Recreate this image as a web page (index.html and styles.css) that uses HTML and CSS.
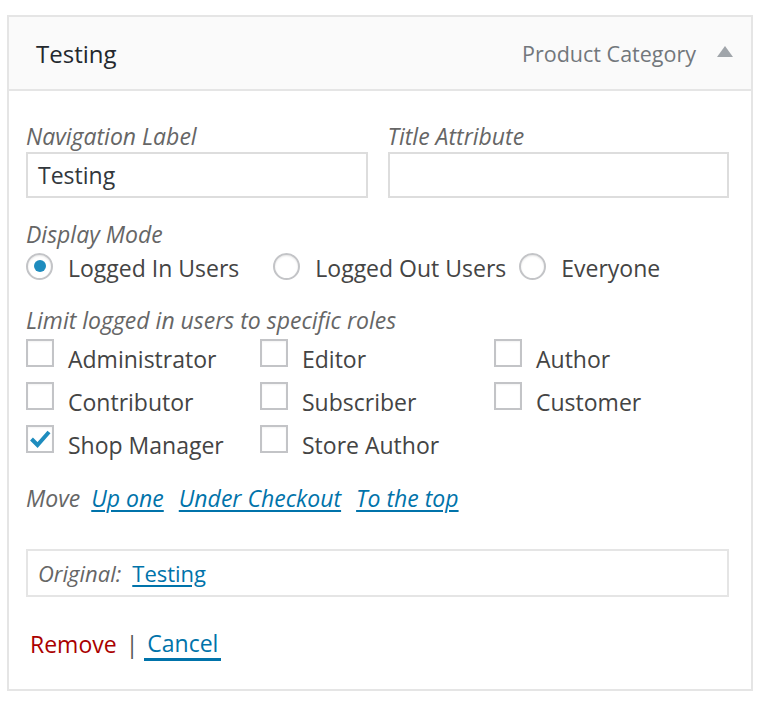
FILE: index.html
```html
<!DOCTYPE html>
<html>
<head>
<meta charset="utf-8">
<link rel="stylesheet" href="styles.css">
</head>
<body>
<div class="panel">
  <div class="head">
    <span class="title">Testing</span>
    <span class="type">Product Category</span>
    <span class="arrow"></span>
  </div>
  <div class="body">
    <div class="fields">
      <div class="field">
        <div class="label">Navigation Label</div>
        <div class="input">Testing</div>
      </div>
      <div class="field">
        <div class="label">Title Attribute</div>
        <div class="input"></div>
      </div>
    </div>
    <div class="label mode">Display Mode</div>
    <div class="radios">
      <span class="radio on"></span><span class="rtext">Logged In Users</span>
      <span class="radio"></span><span class="rtext">Logged Out Users</span>
      <span class="radio"></span><span class="rtext">Everyone</span>
    </div>
    <div class="label roles-label">Limit logged in users to specific roles</div>
    <div class="roles">
      <div class="role"><span class="cb"></span><span class="ctext">Administrator</span></div>
      <div class="role"><span class="cb"></span><span class="ctext">Editor</span></div>
      <div class="role"><span class="cb"></span><span class="ctext">Author</span></div>
      <div class="role"><span class="cb"></span><span class="ctext">Contributor</span></div>
      <div class="role"><span class="cb"></span><span class="ctext">Subscriber</span></div>
      <div class="role"><span class="cb"></span><span class="ctext">Customer</span></div>
      <div class="role"><span class="cb checked"><svg viewBox="0 0 24 24" width="24" height="24"><path d="M3.5 12 L9.5 18 L21 5" fill="none" stroke="#1e8cbe" stroke-width="4" stroke-linecap="butt"/></svg></span><span class="ctext">Shop Manager</span></div>
      <div class="role"><span class="cb"></span><span class="ctext">Store Author</span></div>
    </div>
    <div class="move">
      <span class="mlabel">Move</span>
      <a class="mlink">Up one</a>
      <a class="mlink">Under Checkout</a>
      <a class="mlink">To the top</a>
    </div>
    <div class="original">
      <span class="olabel">Original:</span>
      <a class="olink">Testing</a>
    </div>
    <div class="actions">
      <span class="remove">Remove</span><span class="sep">|</span><span class="cancel">Cancel</span>
    </div>
  </div>
</div>
</body>
</html>
```
FILE: styles.css
```css
html, body {
  margin: 0;
  padding: 0;
  background: #fff;
}
body {
  font-family: "Open Sans", "Noto Sans", sans-serif;
  color: #444;
}
.panel {
  margin: 15px 0 0 7px;
  width: 742px;
  border: 2px solid #e5e5e5;
}
.head {
  display: flex;
  align-items: center;
  height: 72px;
  background: #fafafa;
  border-bottom: 2px solid #e5e5e5;
  padding: 0 18px 0 27px;
}
.title {
  font-size: 24px;
  color: #23282d;
  flex: 1;
}
.type {
  font-size: 21.5px;
  color: #72777c;
  margin-right: 21px;
}
.arrow {
  width: 0;
  height: 0;
  border-left: 8px solid transparent;
  border-right: 8px solid transparent;
  border-bottom: 11px solid #a0a5aa;
  margin-top: -4px;
}
.body {
  padding: 30px 22px 28px 17px;
}
.fields {
  display: flex;
  gap: 20px;
}
.field {
  flex: 1;
}
.label {
  font-style: italic;
  font-size: 23px;
  color: #666;
  line-height: 30px;
}
.input {
  margin-top: 1px;
  height: 42px;
  border: 2px solid #ddd;
  font-size: 23px;
  color: #32373c;
  line-height: 42px;
  padding-left: 10px;
}
.mode {
  margin-top: 21px;
}
.radios {
  display: flex;
  align-items: center;
  height: 36px;
  margin-top: 1px;
  font-size: 23px;
  color: #444;
}
.radio {
  width: 23px;
  height: 23px;
  border: 2px solid #c3c4c7;
  border-radius: 50%;
  margin-top: -4px;
  display: flex;
  align-items: center;
  justify-content: center;
  box-shadow: inset 0 1px 2px rgba(0,0,0,0.1);
}
.radio.on::after {
  content: "";
  width: 12px;
  height: 12px;
  border-radius: 50%;
  background: #1e8cbe;
}
.rtext {
  margin-left: 15px;
  margin-right: 34px;
}
.rtext:nth-of-type(4) {
  margin-right: 13px;
}
.roles-label {
  margin-top: 19px;
}
.roles {
  display: grid;
  grid-template-columns: 234px 234px 234px;
  grid-auto-rows: 43px;
  margin-top: 2px;
}
.role {
  display: flex;
  align-items: center;
  font-size: 23px;
  color: #444;
}
.cb {
  width: 24px;
  height: 24px;
  border: 2px solid #c3c4c7;
  margin-top: -12px;
  display: flex;
  align-items: center;
  justify-content: center;
  background: #fff;
  box-shadow: inset 0 1px 2px rgba(0,0,0,0.05);
}
.cb svg {
  display: block;
}
.ctext {
  margin-left: 14px;
}
.move {
  margin-top: 17px;
  font-size: 23px;
  font-style: italic;
  display: flex;
  gap: 15px;
  line-height: 30px;
}
.mlabel {
  color: #666;
  margin-right: -4px;
}
.mlink {
  color: #0073aa;
  text-decoration: underline;
  text-decoration-thickness: 2px;
  text-underline-offset: 3px;
}
.original {
  margin-top: 36px;
  border: 2px solid #e5e5e5;
  height: 44px;
  display: flex;
  align-items: center;
  padding-left: 10px;
  font-size: 22px;
}
.olabel {
  font-style: italic;
  color: #666;
  margin-right: 11px;
}
.olink {
  color: #0073aa;
  text-decoration: underline;
  text-decoration-thickness: 2px;
  text-underline-offset: 3px;
}
.actions {
  margin-top: 30px;
  font-size: 23px;
  display: flex;
  align-items: center;
  line-height: 34px;
}
.remove {
  color: #a00;
  margin-left: 4px;
}
.sep {
  color: #555;
  margin-left: 9px;
  margin-right: 6px;
}
.cancel {
  color: #0073aa;
  border-bottom: 3px solid #0073aa;
  line-height: 30px;
  padding: 0 3px;
}
```
